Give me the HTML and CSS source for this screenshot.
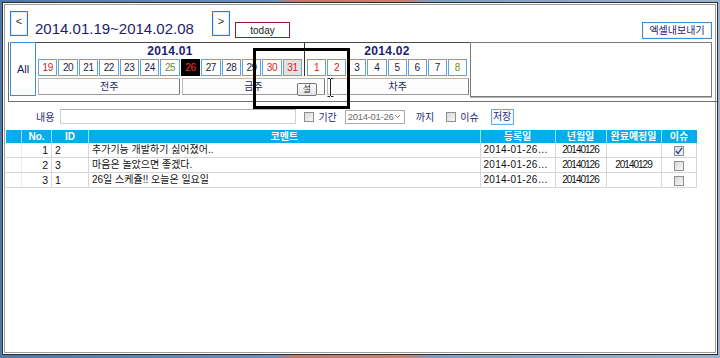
FILE: index.html
```html
<!DOCTYPE html>
<html lang="ko">
<head>
    <meta charset="UTF-8">
    <title>일정 관리</title>
    <link rel="stylesheet" href="styles.css">
</head>
<body>
    <div class="window">
        <div class="header">
            <button class="nav-btn">&lt;</button>
            <h1 class="range">2014.01.19~2014.02.08</h1>
            <button class="nav-btn">&gt;</button>
            <button class="today-btn">today</button>
            <button class="excel-btn">엑셀내보내기</button>
        </div>

        <div class="calendar">
            <div class="all-cell">All</div>
            <div class="months">
                <div class="month-row">
                    <div class="month jan">
                        <div class="month-title">2014.01</div>
                        <div class="days">
                            <div class="day red">19</div>
                            <div class="day">20</div>
                            <div class="day">21</div>
                            <div class="day">22</div>
                            <div class="day">23</div>
                            <div class="day">24</div>
                            <div class="day sat">25</div>
                            <div class="day today">26</div>
                            <div class="day">27</div>
                            <div class="day">28</div>
                            <div class="day">29</div>
                            <div class="day red">30</div>
                            <div class="day red hover">31</div>
                        </div>
                    </div>
                    <div class="month feb">
                        <div class="month-title">2014.02</div>
                        <div class="days">
                            <div class="day red">1</div>
                            <div class="day red">2</div>
                            <div class="day">3</div>
                            <div class="day">4</div>
                            <div class="day">5</div>
                            <div class="day">6</div>
                            <div class="day">7</div>
                            <div class="day sat">8</div>
                        </div>
                    </div>
                </div>
                <div class="weeks">
                    <button class="week-btn">전주</button>
                    <button class="week-btn">금주</button>
                    <button class="week-btn">차주</button>
                </div>
            </div>
            <div class="cal-empty"></div>
        </div>

        <div class="filter">
            <span class="label">내용</span>
            <div class="text-input"></div>
            <span class="check"></span>
            <span class="label">기간</span>
            <div class="date-box">
                <span>2014-01-26</span>
                <svg width="7" height="5" viewBox="0 0 7 5"><path d="M1 1l2.5 2.5L6 1" fill="none" stroke="#777" stroke-width="1"/></svg>
            </div>
            <span class="label until">까지</span>
            <span class="check issue-check"></span>
            <span class="label">이슈</span>
            <button class="save-btn">저장</button>
        </div>

        <table class="grid">
            <thead>
                <tr>
                    <th class="c-head"></th>
                    <th class="c-no">No.</th>
                    <th class="c-id">ID</th>
                    <th class="c-text">코멘트</th>
                    <th class="c-reg">등록일</th>
                    <th class="c-ymd">년월일</th>
                    <th class="c-due">완료예정일</th>
                    <th class="c-issue">이슈</th>
                </tr>
            </thead>
            <tbody>
                <tr>
                    <td></td>
                    <td class="num">1</td>
                    <td>2</td>
                    <td class="ko">추가기능 개발하기 싫어졌어..</td>
                    <td class="reg">2014-01-26…</td>
                    <td class="ymd">20140126</td>
                    <td class="ymd"></td>
                    <td class="mid"><span class="check checked"><svg width="8" height="8" viewBox="0 0 8 8"><path d="M1 4l2 2.5L7 0.8" fill="none" stroke="#1d3f9a" stroke-width="1.3"/></svg></span></td>
                </tr>
                <tr>
                    <td></td>
                    <td class="num">2</td>
                    <td>3</td>
                    <td class="ko">마음은 놀았으면 좋겠다.</td>
                    <td class="reg">2014-01-26…</td>
                    <td class="ymd">20140126</td>
                    <td class="ymd">20140129</td>
                    <td class="mid"><span class="check"></span></td>
                </tr>
                <tr>
                    <td></td>
                    <td class="num">3</td>
                    <td>1</td>
                    <td class="ko">26일 스케쥴!! 오늘은 일요일</td>
                    <td class="reg">2014-01-26…</td>
                    <td class="ymd">20140126</td>
                    <td class="ymd"></td>
                    <td class="mid"><span class="check"></span></td>
                </tr>
            </tbody>
        </table>

        <!-- 캡처 위에 그려진 표시와 툴팁, 커서 -->
        <div class="mark"></div>
        <div class="tip">설</div>
        <svg class="ibeam" width="7" height="19" viewBox="0 0 7 19">
            <path d="M0.5 0.5h2.5M4 0.5h2.5M3.5 1v17M0.5 18.5h2.5M4 18.5h2.5" fill="none" stroke="#fff" stroke-width="2.2"/>
            <path d="M0.5 0.5h2.5M4 0.5h2.5M3.5 1v17M0.5 18.5h2.5M4 18.5h2.5" fill="none" stroke="#222" stroke-width="1"/>
        </svg>
    </div>
</body>
</html>
```

FILE: styles.css
```css
html, body {
    height: 358px;
}
body {
    margin: 0;
    overflow: hidden;
    font-family: "Liberation Sans", "Noto Sans CJK KR", sans-serif;
    font-size: 11px;
    color: #1c1c4c;
    background: linear-gradient(90deg, #4f78a6 0%, #6b92be 38%, #c07a6a 41%, #c8826f 56%, #7d9ec4 60%, #9bb2cc 100%);
}
button {
    font-family: "Liberation Sans", "Noto Sans CJK KR", sans-serif;
    padding: 0;
    cursor: pointer;
}
.window {
    position: relative;
    box-sizing: border-box;
    height: 353px;
    margin: 2px 2px 0 2px;
    padding-top: 8px;
    background: #fff;
    border: 1px solid #2e2e2e;
    box-shadow: inset 0 0 0 1px #fff, inset 0 0 0 2px #9c9c9c;
}

/* 상단 */
.header {
    display: flex;
    align-items: flex-start;
    height: 31px;
    padding-left: 7px;
}
.nav-btn {
    box-sizing: border-box;
    width: 18px;
    height: 25px;
    border: 1px solid #2a7cd0;
    box-shadow: inset 0 0 0 1px #dcecfb;
    background: #fff;
    padding-top: 3px;
    font-size: 11px;
    line-height: 12px;
    color: #333;
    display: flex;
    justify-content: center;
    align-items: flex-start;
}
.range {
    margin: 9px 0 0 7px;
    width: 177px;
    font-size: 15px;
    font-weight: normal;
    line-height: 18px;
    color: #1d1d6b;
}
.today-btn {
    box-sizing: border-box;
    margin: 11px 0 0 5px;
    width: 55px;
    height: 16px;
    border: 1px solid #8e1b3d;
    background: #fff;
    font-size: 10px;
    line-height: 13px;
    color: #222;
}
.excel-btn {
    box-sizing: border-box;
    margin: 11px 5px 0 auto;
    width: 70px;
    height: 17px;
    border: 1px solid #3b8ed8;
    box-shadow: inset 0 0 0 1px #e6f1fb;
    background: #fff;
    font-size: 10px;
    line-height: 14px;
    color: #1e2a6e;
}

/* 달력 */
.calendar {
    display: flex;
    align-items: flex-start;
    height: 59px;
    margin-left: 5px;
    padding-left: 1px;
    border-left: 1px solid #6f6f6f;
    border-bottom: 1px solid #6f6f6f;
}
.all-cell {
    box-sizing: border-box;
    width: 26px;
    height: 54px;
    border: 1px solid #3d8fdb;
    display: flex;
    align-items: center;
    justify-content: center;
    font-size: 11px;
    color: #1c1c5c;
}
.months {
    width: 434px;
    border-top: 1px solid #4a4a4a;
}
.month-row {
    display: flex;
}
.month {
    box-sizing: border-box;
    height: 33px;
}
.jan {
    width: 268px;
    padding: 0 2px;
}
.feb {
    width: 166px;
    padding: 0 3px 0 2px;
    border-left: 1px solid #333;
}
.month-title {
    height: 16px;
    font-size: 12px;
    font-weight: bold;
    line-height: 16px;
    text-align: center;
    color: #1c1c70;
    letter-spacing: 0.3px;
}
.days {
    display: flex;
    gap: 1px;
    height: 17px;
}
.day {
    flex: 1;
    box-sizing: border-box;
    border: 1px solid #5aa5e6;
    background: #fff;
    font-size: 10px;
    line-height: 15px;
    text-align: center;
    letter-spacing: -0.4px;
    color: #1c1c4c;
}
.day.red {
    color: #e0141e;
}
.day.sat {
    color: #6b8e23;
}
.day.today {
    background: #000;
    border-color: #000;
    color: #ff2a2a;
}
.day.hover {
    background: #e2e2e2;
}
.weeks {
    display: flex;
    gap: 2px;
    margin-top: 2px;
    padding: 0 1px 0 2px;
}
.week-btn {
    flex: 1;
    box-sizing: border-box;
    height: 17px;
    border: 1px solid #b8b8b8;
    border-right-color: #7c7c7c;
    border-bottom-color: #9a9a9a;
    background: #fdfdfd;
    font-size: 10px;
    line-height: 14px;
    color: #2a2a70;
}
.cal-empty {
    box-sizing: border-box;
    width: 242px;
    height: 55px;
    border: 1px solid #7a7a7a;
    box-shadow: 0 1px 0 #b4b4b4;
}

/* 검색줄 */
.filter {
    display: flex;
    align-items: center;
    height: 17px;
    margin-top: 6px;
    padding-left: 33px;
}
.label {
    font-size: 10px;
    color: #1f2a7a;
}
.text-input {
    box-sizing: border-box;
    width: 236px;
    height: 15px;
    margin-left: 6px;
    border: 1px solid #d0d0d0;
    border-top-color: #b0b0b0;
}
.check {
    display: inline-flex;
    align-items: center;
    justify-content: center;
    box-sizing: border-box;
    width: 10px;
    height: 10px;
    margin: 0 4px 0 8px;
    border: 1px solid #8f8f8f;
    background: linear-gradient(135deg, #d8d8d8, #f8f8f8);
}
.issue-check {
    margin-left: 12px;
}
.date-box {
    display: flex;
    align-items: center;
    justify-content: space-between;
    box-sizing: border-box;
    width: 60px;
    height: 14px;
    margin-left: 8px;
    padding: 0 3px 0 2px;
    border: 1px solid #a9a9a9;
    font-size: 9.5px;
    color: #6e6e6e;
    letter-spacing: -0.3px;
}
.until {
    margin-left: 11px;
}
.save-btn {
    box-sizing: border-box;
    width: 23px;
    height: 16px;
    margin-left: 12px;
    border: 1px solid #6aaae8;
    box-shadow: inset 0 0 0 1px #eaf3fc;
    background: #fff;
    font-size: 10px;
    line-height: 13px;
    color: #1f2a7a;
}

/* 목록 */
.grid {
    width: 691px;
    margin: 5px 0 0 3px;
    border-collapse: collapse;
    table-layout: fixed;
}
.grid th {
    height: 13px;
    padding: 0;
    background: #00adef;
    border-right: 1px solid #a6ddf5;
    color: #fff;
    font-size: 10px;
    font-weight: bold;
    line-height: 13px;
    text-align: center;
}
.grid th:last-child {
    border-right: none;
}
.grid td {
    height: 14px;
    padding: 0 3px;
    border-right: 1px solid #d6d6d6;
    border-bottom: 1px solid #d6d6d6;
    font-size: 10.5px;
    line-height: 14px;
    color: #111;
    white-space: nowrap;
    overflow: hidden;
}
.grid td:first-child {
    border-right-color: #ececec;
}
.c-head { width: 15px; }
.c-no { width: 29px; }
.c-id { width: 36px; }
.c-reg { width: 74px; }
.c-ymd { width: 50px; }
.c-due { width: 54px; }
.c-issue { width: 35px; }
.grid td.num {
    text-align: right;
}
.grid td.ko {
    font-size: 10px;
}
.grid td.reg {
    font-size: 10px;
    letter-spacing: 0.3px;
}
.grid td.ymd {
    text-align: center;
    font-size: 10px;
    letter-spacing: -1px;
}
.grid td.mid {
    text-align: center;
}
.grid td .check {
    margin: 3px 0 0;
    vertical-align: top;
}

/* 캡처 표시 */
.mark {
    position: absolute;
    left: 250px;
    top: 45px;
    box-sizing: border-box;
    width: 97px;
    height: 61px;
    border: 3px solid #000;
}
.tip {
    position: absolute;
    left: 294px;
    top: 80px;
    box-sizing: border-box;
    width: 20px;
    height: 13px;
    border: 1px solid #767676;
    border-radius: 2px;
    background: linear-gradient(#fff, #e2e2e2);
    font-size: 9px;
    line-height: 11px;
    text-align: center;
    color: #333;
}
.ibeam {
    position: absolute;
    left: 324px;
    top: 75px;
}
```
